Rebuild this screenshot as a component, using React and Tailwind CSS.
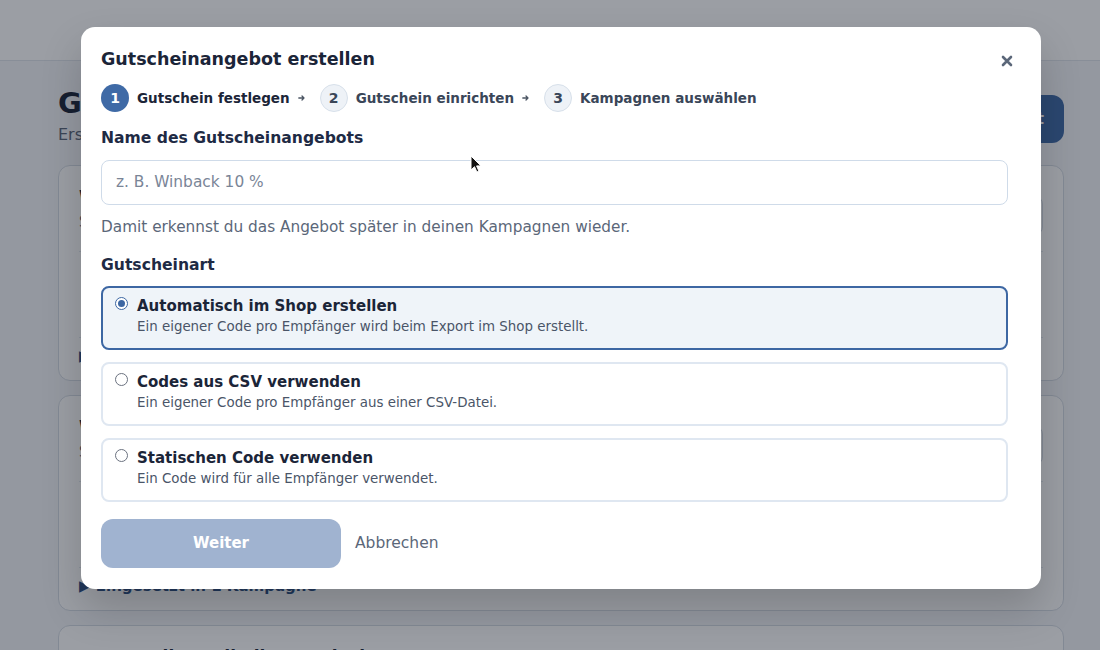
import React from "react";

const font = { fontFamily: "'DejaVu Sans', 'Noto Sans', sans-serif" };

function BgCard({ title, sub }) {
  return (
    <div className="h-[216px] rounded-xl border border-[#d5dbe4] bg-white px-5">
      <div className="flex items-start justify-between pt-[20px]">
        <div>
          <div className="text-[17px] font-bold leading-[22px] text-[#1b2538]">{title}</div>
          <div className="mt-[4px] text-[15px] leading-[20px] text-[#5b6779]">{sub}</div>
        </div>
        <div className="mt-[10px] rounded-lg border border-[#d5dbe4] px-4 py-2 text-[14px] font-bold text-[#334155]">Bearbeiten</div>
      </div>
      <div className="mt-[16px] h-[86px] border-t border-[#e2e8f0]"></div>
      <div className="border-t border-[#e2e8f0] pt-[8px] text-[15px] font-bold leading-[20px] text-[#2c4f82]">▶ Eingesetzt in 1 Kampagne</div>
    </div>
  );
}

function Option({ selected, title, desc }) {
  return (
    <label
      className={
        "flex h-[64px] items-start gap-[9px] rounded-lg border-2 px-[12px] pt-[8px] " +
        (selected ? "border-[#3d67a3] bg-[#eff4f9]" : "border-[#dfe7f1] bg-white")
      }
    >
      <span
        className={
          "mt-[1px] flex h-[13px] w-[13px] shrink-0 items-center justify-center rounded-full border " +
          (selected ? "border-[#3d67a3] bg-white" : "border-[#6b7280] bg-white")
        }
      >
        {selected && <span className="h-[7px] w-[7px] rounded-full bg-[#3d67a3]"></span>}
      </span>
      <span className="flex flex-col">
        <span className="text-[15px] font-bold leading-[20px] text-[#1b2538]">{title}</span>
        <span className="mt-[2px] text-[13.4px] leading-[17px] text-[#4a5568]">{desc}</span>
      </span>
    </label>
  );
}

function Step({ n, label, active }) {
  return (
    <div className="flex items-center gap-[8px]">
      <span
        className={
          "flex h-[28px] w-[28px] items-center justify-center rounded-full text-[14px] font-bold " +
          (active ? "bg-[#3f6aa6] text-white" : "border border-[#d7e0ea] bg-[#eef2f7] text-[#3a4658]")
        }
      >
        {n}
      </span>
      <span className={"text-[13.5px] font-bold " + (active ? "text-[#1b2538]" : "text-[#3a4658]")}>{label}</span>
    </div>
  );
}

function Arrow() {
  return (
    <svg width="8" height="8" viewBox="0 0 10 10" className="ml-[8px] mr-[14px]">
      <path d="M1 5h6.5M5 2.5L7.5 5 5 7.5" stroke="#4b5563" strokeWidth="1.6" fill="none" strokeLinecap="round" strokeLinejoin="round" />
    </svg>
  );
}

export default function App() {
  return (
    <div className="relative h-[650px] w-[1100px] overflow-hidden bg-[#f3f5f8]" style={font}>
      {/* background page */}
      <div className="h-[61px] border-b border-[#dfe4ea] bg-white"></div>
      <div className="pl-[58px] pr-[36px]">
        <div className="flex items-start justify-between pt-[24px]">
          <div>
            <div className="text-[29px] font-bold leading-[36px] text-[#1b2538]">Gutscheinangebote</div>
            <div className="mt-[2px] text-[16px] text-[#5b6779]">Erstelle Gutscheinangebote für deine Kampagnen.</div>
          </div>
          <div className="mt-[10px] flex h-[48px] items-center rounded-xl bg-[#3f6aa6] px-5 text-[15px] font-bold text-white">
            Neues Angebot
          </div>
        </div>
        <div className="mt-[18px] flex flex-col gap-[14px]">
          <BgCard title="Winback 10 %" sub="Shopify · Automatisch" />
          <BgCard title="Willkommen 15 %" sub="Shopify · CSV" />
          <BgCard title="Cross-Sell Handball Regenjacken" sub="Statischer Code" />
        </div>
      </div>

      {/* overlay */}
      <div className="absolute inset-0 bg-[rgba(17,24,39,0.42)]">
        <div className="ml-[81px] mt-[27px] w-[960px] rounded-[14px] bg-white pb-[21px] pl-[20px] pr-[33px] pt-[18px] shadow-[0_20px_40px_rgba(0,0,0,0.18)]">
          <div className="flex items-center justify-between">
            <h2 className="text-[17.5px] font-bold leading-[28px] text-[#1b2538]">Gutscheinangebot erstellen</h2>
            <svg width="12" height="12" viewBox="0 0 12 12" className="mr-[-5px] mt-[4px]">
              <path d="M2 2l8 8M10 2l-8 8" stroke="#5b6779" strokeWidth="2.6" strokeLinecap="round" />
            </svg>
          </div>
          <div className="mt-[11px] flex items-center">
            <Step n="1" label="Gutschein festlegen" active />
            <Arrow />
            <Step n="2" label="Gutschein einrichten" />
            <Arrow />
            <Step n="3" label="Kampagnen auswählen" />
          </div>

          <div className="mt-[15px] text-[15.6px] font-bold leading-[22px] text-[#1e2a44]">Name des Gutscheinangebots</div>
          <div className="mt-[11px] flex h-[45px] items-center rounded-lg border border-[#cfdbe9] px-[14px] text-[15.4px] text-[#7a8597]">
            z. B. Winback 10 %
          </div>
          <div className="mt-[12px] text-[15.3px] leading-[20px] text-[#5b6779]">
            Damit erkennst du das Angebot später in deinen Kampagnen wieder.
          </div>

          <div className="mt-[17px] text-[15.6px] font-bold leading-[22px] text-[#1e2a44]">Gutscheinart</div>
          <div className="mt-[10px] flex flex-col gap-[12px]">
            <Option selected title="Automatisch im Shop erstellen" desc="Ein eigener Code pro Empfänger wird beim Export im Shop erstellt." />
            <Option title="Codes aus CSV verwenden" desc="Ein eigener Code pro Empfänger aus einer CSV-Datei." />
            <Option title="Statischen Code verwenden" desc="Ein Code wird für alle Empfänger verwendet." />
          </div>

          <div className="mt-[17px] flex items-center gap-[14px]">
            <div className="flex h-[49px] w-[240px] items-center justify-center rounded-xl bg-[#a0b3d0] text-[15px] font-bold text-white">
              Weiter
            </div>
            <div className="text-[15.5px] text-[#5b6779]">Abbrechen</div>
          </div>
        </div>
      </div>

      {/* cursor */}
      <svg className="absolute left-[470px] top-[155px]" width="12" height="18" viewBox="0 0 12 18">
        <path d="M1 1v14l3.5-3.3 2.4 5.3 2-0.9-2.3-5.2H11z" fill="#111" stroke="#fff" strokeWidth="1" strokeLinejoin="round" />
      </svg>
    </div>
  );
}
